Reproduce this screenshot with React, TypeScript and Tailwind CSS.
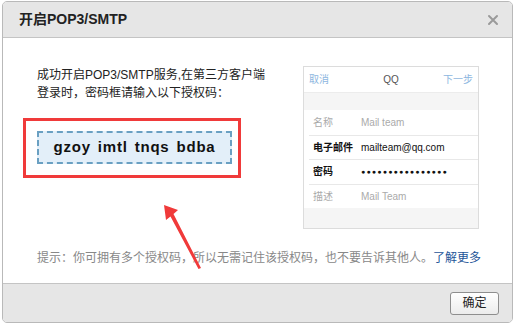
import React from "react";

const font = { fontFamily: '"Liberation Sans", "Noto Sans CJK SC", sans-serif' };

function PhoneMock() {
  const rows = [
    { label: "名称", value: "Mail team", dim: true },
    { label: "电子邮件", value: "mailteam@qq.com", dim: false },
    { label: "密码", value: "●●●●●●●●●●●●●●●●", dim: false, dots: true },
    { label: "描述", value: "Mail Team", dim: true },
  ];
  return (
    <div className="w-[176px] h-[163px] border border-[#dcdcdc] bg-[#f5f5f5] flex flex-col shrink-0">
      <div className="h-[25px] bg-white flex items-center justify-between px-[5px] text-[10px]">
        <span className="text-[#8db6e0] w-[40px]">取消</span>
        <span className="text-[#555]">QQ</span>
        <span className="text-[#8db6e0] w-[40px] text-right">下一步</span>
      </div>
      <div className="h-[18px] border-t border-[#ececec]" />
      <div className="bg-white flex flex-col">
        {rows.map((r, i) => (
          <div
            key={r.label}
            className={`h-[24.5px] flex items-center ml-[5px] text-[10px] ${i > 0 ? "border-t border-[#e8e8e8]" : ""}`}
          >
            <span className={`w-[52px] pl-[4px] ${r.dim ? "text-[#aaa]" : "text-[#111] font-semibold"}`}>{r.label}</span>
            <span
              className={`${r.dim ? "text-[#aaa]" : "text-[#111] font-medium"} ${r.dots ? "text-[7px] tracking-[1.2px]" : ""}`}
            >
              {r.value}
            </span>
          </div>
        ))}
      </div>
      <div className="flex-1" />
    </div>
  );
}

export default function App() {
  return (
    <div className="w-[515px] h-[324px] bg-white relative" style={font}>
      <div className="absolute left-[2px] top-[1px] w-[511px] h-[322px] border border-[#b9b9b9] rounded-[5px] overflow-hidden flex flex-col bg-white">
        {/* header */}
        <div className="h-[36px] bg-[#e6e6e6] border-b border-[#c4c4c4] flex items-center justify-between pl-[16px] pr-[13px] shrink-0">
          <span className="text-[14px] font-bold text-[#222]">开启POP3/SMTP</span>
          <svg width="12" height="12" viewBox="0 0 12 12">
            <path d="M2 2L10 10M10 2L2 10" stroke="#9a9a9a" strokeWidth="2" strokeLinecap="round" />
          </svg>
        </div>

        {/* body */}
        <div className="flex-1 flex flex-col pt-[28px] pl-[34px] pr-[33px] relative">
          <div className="flex justify-between">
            <div className="flex flex-col">
              <p className="text-[12px] leading-[18px] text-[#222]">
                成功开启POP3/SMTP服务,在第三方客户端
                <br />
                登录时，密码框请输入以下授权码：
              </p>
              <div className="relative mt-[29px] w-[195px]">
                <div className="h-[33px] bg-[#e3eff9] border-2 border-dashed border-[#6aa0c2] flex items-center justify-center">
                  <span className="text-[15px] font-bold text-[#111] tracking-[0.8px]" style={{ wordSpacing: "2px" }}>
                    gzoy imtl tnqs bdba
                  </span>
                </div>
                <div className="absolute left-[-14px] top-[-13px] right-[-9px] bottom-[-14px] border-[3px] border-[#f03a3a]" />
              </div>
            </div>
            <PhoneMock />
          </div>
          <p className="mt-[20px] text-[12px] leading-[18px] text-[#888] whitespace-nowrap">
            提示：你可拥有多个授权码，所以无需记住该授权码，也不要告诉其他人。
            <span className="text-[#1e5598]">了解更多</span>
          </p>
          <svg className="absolute left-[150px] top-[160px]" width="60" height="75" viewBox="0 0 60 75">
            <path d="M11 7 L25 12 L20.5 16 L48 70 L45.5 71 L17.5 18.5 L13 22 Z" fill="#f03a3a" />
          </svg>
        </div>

        {/* footer */}
        <div className="h-[39px] bg-[#e6e6e6] border-t border-[#c4c4c4] flex items-center justify-end pr-[13px] shrink-0">
          <button className="w-[49px] h-[23px] rounded-[3px] border border-[#8e8e8e] bg-gradient-to-b from-white to-[#ececec] text-[12px] text-[#222]">
            确定
          </button>
        </div>
      </div>
    </div>
  );
}
